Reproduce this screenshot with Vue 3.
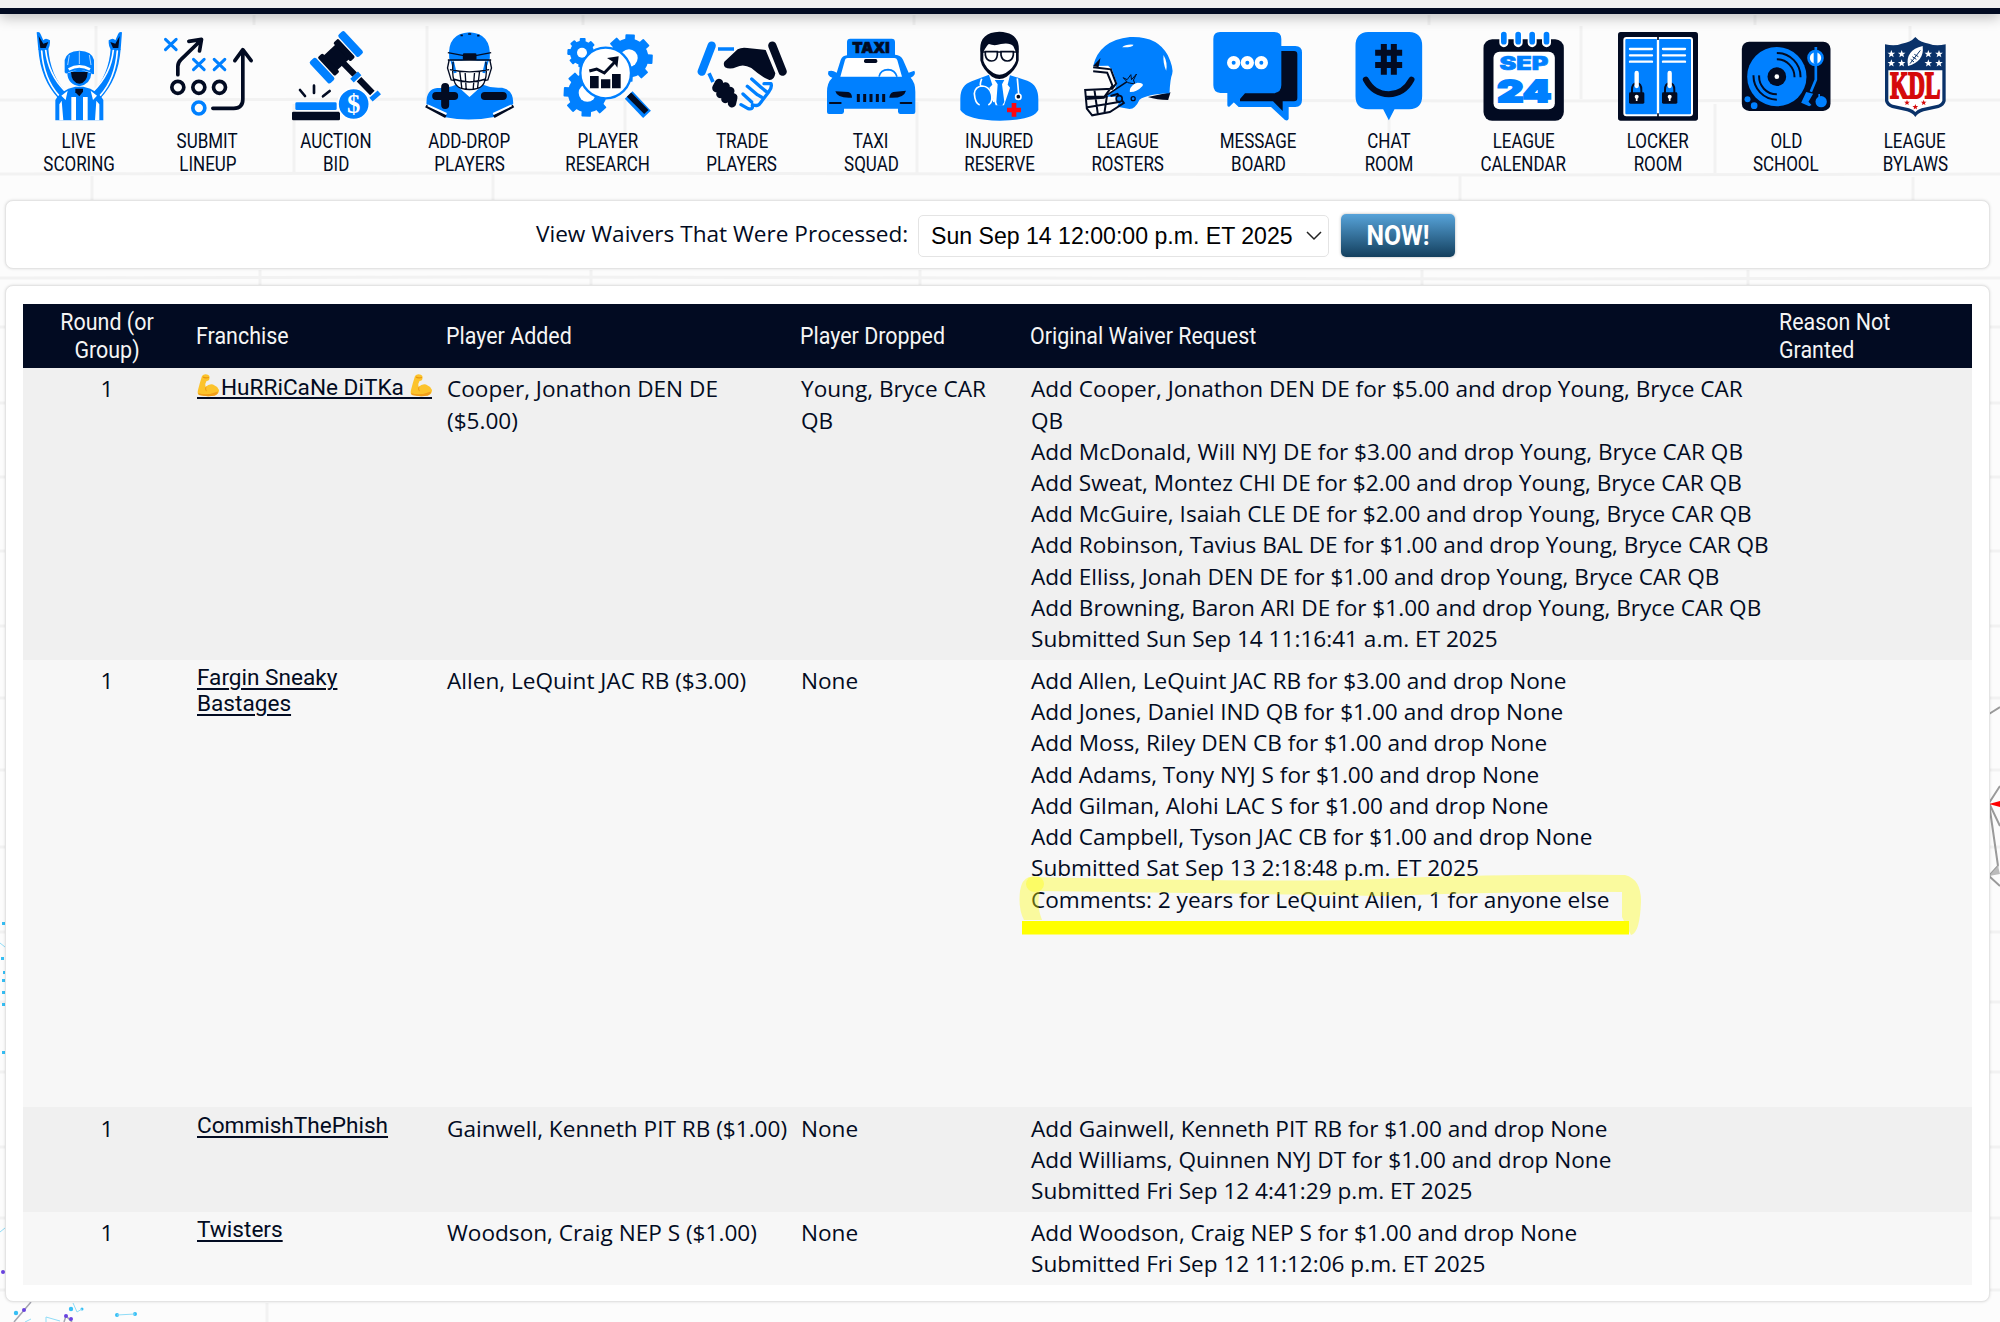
<script setup>
const B = '#0080ff'
const N = '#020b22'

const gear = (cx, cy, r, hole) => {
  let s = ''
  for (let i = 0; i < 8; i++) {
    s += `<rect x="${cx - r * 0.2}" y="${cy - r}" width="${r * 0.4}" height="${r}" rx="3" fill="${B}" transform="rotate(${i * 45 + 3} ${cx} ${cy})"/>`
  }
  return s + `<circle cx="${cx}" cy="${cy}" r="${r * 0.82}" fill="${B}"/><circle cx="${cx}" cy="${cy}" r="${hole}" fill="#fff"/>`
}
const star = (cx, cy, r, fill) => {
  const p = []
  for (let i = 0; i < 10; i++) {
    const a = -Math.PI / 2 + (i * Math.PI) / 5
    const q = i % 2 ? r * 0.42 : r
    p.push(`${(cx + q * Math.cos(a)).toFixed(1)},${(cy + q * Math.sin(a)).toFixed(1)}`)
  }
  return `<polygon points="${p.join(' ')}" fill="${fill}"/>`
}
const locker = (x) => `
  <g stroke="#fff" stroke-width="7" stroke-linecap="round"><path d="M${x + 15} 147h66M${x + 15} 166h66M${x + 15} 185h66"/></g>
  <path d="M${x + 21} 280v-10q0-20 14-20t14 20v10" fill="none" stroke="${N}" stroke-width="6"/>
  <path d="M${x + 35} 219v39" stroke="#fff" stroke-width="13" stroke-linecap="round"/>
  <rect x="${x + 12}" y="277" width="46" height="34" rx="4" fill="${N}"/>
  <circle cx="${x + 35}" cy="290" r="6" fill="#fff"/><path d="M${x + 35} 290v13" stroke="#fff" stroke-width="5"/>`

const items = [
  { a: 'LIVE', b: 'SCORING', x: 102, art: `
    <g fill="none" stroke-linejoin="round" stroke-linecap="round">
      <path d="M130 146Q136 232 186 285M347 146Q341 232 290 285" stroke="${B}" stroke-width="30" stroke-linecap="butt"/>
      <path d="M125 153Q131 236 176 286M137 150Q145 224 196 274M352 153Q346 236 301 286M340 150Q332 224 279 274" stroke="#fff" stroke-width="5"/>
    </g>
    <path d="M110 97Q119 94 122 103L130 121Q136 112 150 121Q151 139 143 149L115 149ZM366 97Q357 94 354 103L346 121Q340 112 326 121Q325 139 333 149L362 149Z" fill="${B}"/>
    <path d="M116 108L130 131L145 126L137 144L121 144ZM359 108L346 131L331 126L339 144L355 144Z" fill="${N}"/>
    <path d="M166 361V300Q174 282 205 266L226 260H250L271 266Q302 282 310 300V361Z" fill="${B}"/>
    <path d="M185 302L190 361H178V313ZM289 302L285 361H298V313Z" fill="#fff"/>
    <path d="M214 291V361H228V291ZM249 291V361H263V291ZM184 287L203 272L197 300ZM291 287L272 272L279 300Z" fill="#fff"/>
    <path d="M202 220Q203 253 238 259Q272 253 274 220L237 208Z" fill="${B}"/>
    <path d="M213 216H263Q262 248 238 251Q214 248 213 216Z" fill="${N}"/>
    <path d="M194 204V180Q200 153 238 152Q276 153 282 180V222Q274 224 270 217Q238 204 206 217Q199 224 194 217Z" fill="${B}"/>
    <path d="M206 208Q238 190 270 208" stroke="#fff" stroke-width="8" fill="none"/>
    <path d="M238 154V192M208 165L203 195M268 165L273 195" stroke="#fff" stroke-width="2"/>
    <path d="M226 266H249V275L238 289L226 277Z" fill="${N}"/>` },
  { a: 'SUBMIT', b: 'LINEUP', x: 487.5, art: `
    <g fill="none" stroke-linecap="round" stroke-linejoin="round">
      <path d="M495 118l32 31m0-31l-32 31M579 178l32 31m0-31l-32 31M641 178l32 31m0-31l-32 31" stroke="${B}" stroke-width="9"/>
      <circle cx="595" cy="324" r="18" stroke="${B}" stroke-width="11"/>
      <g stroke="${N}" stroke-width="11"><circle cx="532" cy="262" r="18"/><circle cx="595" cy="262" r="18"/><circle cx="657" cy="262" r="18"/></g>
      <path d="M532 224V199Q532 187 542 178L602 120M565 124L603 118L597 153M637 325H700Q727 325 727 298V151M703 182L727 149L752 182" stroke="${N}" stroke-width="11"/>
    </g>` },
  { a: 'AUCTION', b: 'BID', x: 873, art: `
    <g transform="translate(1009 172) rotate(-43)">
      <rect x="-38" y="-30" width="76" height="60" fill="${N}"/>
      <rect x="-42" y="-38" width="20" height="76" rx="5" fill="${N}"/>
      <rect x="22" y="-38" width="20" height="76" rx="5" fill="${N}"/>
      <rect x="46" y="-45" width="25" height="90" rx="7" fill="${B}"/>
      <rect x="-71" y="-45" width="25" height="90" rx="7" fill="${B}"/>
    </g>
    <path d="M1028 187L1064 224M1077 238L1117 279" stroke="${N}" stroke-width="19"/>
    <path d="M1056 242L1079 220M1113 299L1138 277" stroke="${B}" stroke-width="15"/>
    <path d="M900 270L915 288M942 257V279M989 273L969 289" stroke="${N}" stroke-width="8" stroke-linecap="round"/>
    <rect x="886" y="307" width="124" height="23" rx="4" fill="${B}"/><rect x="876" y="335" width="144" height="26" rx="4" fill="${N}"/>
    <circle cx="1061" cy="312" r="47" fill="${B}" stroke="#fff" stroke-width="5"/>
    <text x="1061" y="339" font-size="80" font-weight="700" font-family="Liberation Serif, serif" fill="#fff" text-anchor="middle">$</text>` },
  { a: 'ADD-DROP', b: 'PLAYERS', x: 73.5, art: `
    <path d="M78 312Q76 268 110 264Q140 266 166 254L207 291L248 254Q275 266 305 263Q340 270 338 312L286 350Q208 366 135 352Z" fill="${B}"/>
    <path d="M76 318L136 350M339 318L280 350" stroke="${N}" stroke-width="9"/><path d="M82 316L138 342M333 316L278 342" stroke="#fff" stroke-width="6"/>
    <path d="M146 175Q139 100 207 97Q273 100 268 175L258 200Q246 180 207 180Q168 180 158 200Z" fill="${B}"/>
    <path d="M154 182H260L256 226Q250 260 207 270Q164 260 158 226Z" fill="#fff"/>
    <path d="M156 185L164 219M258 185L250 219" stroke="${B}" stroke-width="9"/>
    <g fill="none" stroke="${N}" stroke-width="4"><path d="M142 158L190 167H225L272 158M142 180H272M146 180L141 204L152 240L164 242M268 180L273 204L262 240L250 242M148 209Q207 222 266 209M158 185Q150 256 182 265Q207 272 232 265Q264 256 256 185M158 237Q207 255 256 237M178 216L184 265M194 219L197 268M222 219L218 268M237 216L231 265"/></g>
    <rect x="187" y="160" width="41" height="20" rx="4" fill="${N}"/>
    <path d="M180 106h7m16-4h9m18 5h7" stroke="${N}" stroke-width="5"/>
    <path d="M134 261V315M107 288H161M253 288H307" stroke="${N}" stroke-width="24" stroke-linecap="round"/>` },
  { a: 'PLAYER', b: 'RESEARCH', x: 489, art: gear(546, 158, 44, 15) + gear(687, 174, 71, 26) + gear(562, 279, 71, 26) + `
    <circle cx="617" cy="219" r="76" fill="#fff" stroke="${B}" stroke-width="7"/>
    <path d="M568 213L590 207L613 219L648 182" stroke="${N}" stroke-width="9" fill="none"/><path d="M621 174L656 169L652 203L641 187Z" fill="${N}"/>
    <path d="M570 228h26v37h-26zM603 238h28v27h-28zM636 222h26v43h-26z" fill="${N}"/>
    <path d="M686 285L741 343" stroke="${B}" stroke-width="32"/><path d="M687 284L739 336" stroke="${N}" stroke-width="18"/>` },
  { a: 'TRADE', b: 'PLAYERS', x: 891, art: `
    <path d="M935 137L905 215" stroke="${B}" stroke-width="25" stroke-linecap="round"/><path d="M1117 137L1148 215" stroke="${N}" stroke-width="25" stroke-linecap="round"/>
    <path d="M954 147H1002M927 220L939 246" stroke="${B}" stroke-width="11"/>
    <path d="M973 185L1013 148Q1025 141 1042 144L1097 150L1126 220Q1123 241 1108 240Q1085 231 1054 204Q1030 190 1010 201Q990 210 975 202Q969 194 973 185Z" fill="${N}"/>
    <path d="M957 249L949 264M977 259L961 282M991 273L976 297M1000 292L996 310" stroke="${N}" stroke-width="25" stroke-linecap="round"/>
    <path d="M1055 237L1082 261M1042 259L1072 284M1029 282L1055 306M1023 314L1044 326Q1060 330 1057 316M1092 251L1113 251Q1117 262 1106 276L1081 309Q1074 321 1058 314M1072 284L1084 291M1082 261L1098 274" stroke="${B}" stroke-width="10" fill="none" stroke-linecap="round" stroke-linejoin="round"/>` },
  { a: 'TAXI', b: 'SQUAD', x: 78, art: `
    <path d="M141 166V126Q141 116 151 116H275Q285 116 285 126V164Q303 165 309 179L326 218L343 212Q350 224 332 233Q346 247 346 275V336Q346 342 340 342H301Q295 342 294 335V326H132V335Q131 342 125 342H87Q81 342 81 336V275Q81 248 97 233Q81 229 85 214Q96 209 110 218L122 180Q127 167 141 166Z" fill="${B}"/>
    <path d="M135 180Q136 174 143 174H283Q290 174 292 181L306 230H121Z" fill="#fff"/>
    <path d="M237 230Q242 209 264 209Q285 210 291 230" stroke="${B}" stroke-width="5" fill="none"/>
    <rect x="192" y="177" width="40" height="12" rx="5" fill="${N}"/>
    <path d="M106 274L145 276Q156 280 156 293Q112 296 106 274ZM318 272L280 276Q269 280 268 293Q312 296 318 272Z" fill="${N}"/>
    <path d="M175 282v24m19-24v24m19-24v24m19-24v24m19-24v24" stroke="${N}" stroke-width="9"/><path d="M90 309h32m180 0h32" stroke="${N}" stroke-width="6" stroke-linecap="round"/>
    <text x="213" y="160" text-anchor="middle" font-family="Inter, sans-serif" font-weight="900" font-size="45" textLength="112" lengthAdjust="spacingAndGlyphs" fill="${N}" stroke="${N}" stroke-width="2">TAXI</text>` },
  { a: 'INJURED', b: 'RESERVE', x: 462, art: `
    <path d="M481 330V295Q481 256 515 244L565 225H628L682 242Q715 254 715 298V330Q700 361 600 362Q500 361 481 330Z" fill="${B}"/>
    <path d="M567 225L577 254L568 263L587 316H612L630 263L623 254L630 225Z" fill="#fff"/><path d="M584 240H613L606 253L613 306L606 317H593L589 306L593 253Z" fill="${B}"/>
    <path d="M541 157Q535 97 598 95Q662 97 656 157V181Q650 208 620 230Q598 244 576 230Q547 208 541 181Z" fill="${N}"/>
    <path d="M550 156Q563 132 567 132Q583 139 603 132Q630 127 640 139L648 157V182Q640 204 617 219Q598 230 580 219Q557 204 550 182Z" fill="#fff"/>
    <path d="M543 156H655" stroke="${N}" stroke-width="4"/><path d="M556 155H592V165Q590 183 575 183Q559 183 556 165ZM603 155H640V165Q637 183 622 183Q606 183 603 165Z" fill="#fff" stroke="${N}" stroke-width="5"/>
    <path d="M545 236Q536 261 547 258Q567 259 574 281L582 306M547 258Q525 259 523 281Q525 310 539 315M574 281Q580 306 565 315M652 235L656 282" stroke="#fff" stroke-width="5" fill="none"/>
    <circle cx="655" cy="290" r="8" fill="${N}" stroke="#fff" stroke-width="5"/><path d="M642 309V350M621 330H663" stroke="#fe0610" stroke-width="14"/>` },
  { a: 'LEAGUE', b: 'ROSTERS', x: 847.5, art: `
    <path d="M1042 291L1110 277L1103 300Q1070 300 1042 291Z" fill="${N}"/>
    <path d="M878 198Q896 121 988 111Q1071 107 1102 166Q1120 204 1115 222Q1109 236 1107 280Q1040 283 1017 299Q1005 326 987 327L950 320L963 290L917 290L944 266L949 249L935 209L923 197Z" fill="${B}"/>
    <path d="M878 198L900 174L894 202Z" fill="${N}"/>
    <g fill="none" stroke="${N}" stroke-width="6"><path d="M878 202L931 208L947 251L935 266L854 270L859 326L875 346L928 336L970 309L951 282L930 288M878 214L920 218L936 257L910 293L856 297M882 271L892 342M855 290H919L912 337M861 322L960 305"/><path d="M912 290L981 244" stroke-width="5"/></g>
    <path d="M968 233L980 239L991 224L993 239L1008 222L999 240L1003 252L982 248Z" fill="${B}" stroke="${N}" stroke-width="3"/>
    <circle cx="956" cy="296" r="9" fill="${B}" stroke="${N}" stroke-width="5"/><circle cx="998" cy="296" r="6" fill="${B}" stroke="${N}" stroke-width="4"/>
    <path d="M988 270Q992 253 1011 248Q1032 249 1026 258Q1009 277 988 276ZM965 142Q975 132 999 134Q996 143 965 142ZM1089 165Q1102 187 1097 212Q1087 190 1089 165Z" fill="#fff"/>` },
  { a: 'MESSAGE', b: 'BOARD', x: 39, art: `
    <path d="M200 138H286Q306 138 306 158V300Q306 320 286 321H266V356Q264 364 255 360L213 321H116L90 296Z" fill="${B}"/>
    <path d="M240 153H282Q292 153 292 163V294Q292 304 282 304H248V333L219 304H120V297L135 280H225L240 260Z" fill="${N}"/>
    <path d="M60 96H223Q244 96 244 117V255Q244 278 222 279H130L88 320Q82 322 82 315V279H61Q40 278 40 256V117Q40 96 60 96Z" fill="${B}"/>
    <g fill="${B}" stroke="#fff" stroke-width="14"><circle cx="101" cy="188" r="13"/><circle cx="142" cy="188" r="13"/><circle cx="184" cy="188" r="13"/></g>` },
  { a: 'CHAT', b: 'ROOM', x: 431.5, art: `
    <path d="M504 96H627Q666 98 666 137V288Q666 326 627 328H583L566 361L549 328H504Q466 326 466 288V137Q466 98 504 96Z" fill="${B}"/>
    <path d="M551 132V224M581 132V224M525 158H606M525 195H606" stroke="${N}" stroke-width="18"/>
    <path d="M497 239Q520 282 566 283Q611 282 634 239" stroke="${N}" stroke-width="18" stroke-linecap="round" fill="none"/>` },
  { a: 'LEAGUE', b: 'CALENDAR', x: 835.5, art: `
    <rect x="849" y="118" width="241" height="244" rx="26" fill="${N}"/><rect x="879" y="155" width="184" height="173" rx="18" fill="#fff"/>
    <path d="M910 105V128M953 105V128M995 105V128M1038 105V128" stroke="#fff" stroke-width="27" stroke-linecap="round"/>
    <path d="M910 104V125M953 104V125M995 104V125M1038 104V125" stroke="${B}" stroke-width="17" stroke-linecap="round"/>
    <g font-family="Inter, sans-serif" font-weight="900" fill="${B}" stroke="${B}" text-anchor="middle"><text x="970" y="211" font-size="55" stroke-width="2" textLength="146" lengthAdjust="spacingAndGlyphs">SEP</text><text x="971" y="306" font-size="91" stroke-width="6" textLength="162" lengthAdjust="spacingAndGlyphs">24</text></g>` },
  { a: 'LOCKER', b: 'ROOM', x: 39, art: `
    <rect x="54" y="96" width="240" height="266" rx="8" fill="${N}"/>
    <rect x="73" y="114" width="203" height="232" rx="6" fill="${B}" stroke="#fff" stroke-width="6"/><path d="M174 114V346" stroke="#fff" stroke-width="7"/><path d="M174 106V120M174 340V352" stroke="${N}" stroke-width="5"/>` + locker(75) + locker(174) },
  { a: 'OLD', b: 'SCHOOL', x: 424.5, art: `
    <rect x="427" y="125" width="266" height="208" rx="22" fill="${N}"/><circle cx="532" cy="230" r="89" fill="${B}"/>
    <circle cx="532" cy="230" r="28" fill="${N}"/><circle cx="532" cy="230" r="7" fill="#fff"/>
    <path d="M532 159A71 71 0 0 1 603 232M532 178A53 53 0 0 1 585 232M462 226A71 71 0 0 0 532 299M479 226A53 53 0 0 0 532 283" fill="none" stroke="${N}" stroke-width="6"/>
    <circle cx="648" cy="174" r="21" fill="#fff" stroke="${B}" stroke-width="8"/><path d="M649 141V239L634 275" fill="none" stroke="${B}" stroke-width="8"/><path d="M648 154V190" stroke="${B}" stroke-width="11"/>
    <path d="M620 276L641 281L627 305L636 315L629 319L605 308Z" fill="${B}"/>
    <circle cx="665" cy="305" r="17" fill="${B}"/><path d="M659 282V300" stroke="${B}" stroke-width="5"/><circle cx="444" cy="298" r="9" fill="${B}"/><circle cx="464" cy="317" r="10" fill="${B}"/>` },
  { a: 'LEAGUE', b: 'BYLAWS', x: 810, art: `
    <path d="M855 133Q886 139 905 131Q931 128 946 111Q961 128 987 131Q1006 139 1037 133V303Q1034 318 1016 324L971 334Q954 339 946 351Q938 339 921 334L876 324Q858 318 855 303Z" fill="#0a3269"/>
    <path d="M865 211H1027V302Q1023 312 1010 315L965 325Q951 330 946 336Q941 330 927 325L882 315Q869 312 865 302Z" fill="#fff"/>` +
    [[874, 162], [905, 162], [985, 162], [1017, 162], [874, 190], [905, 190], [985, 190], [1017, 190]].map(p => star(p[0], p[1], 12, '#fff')).join('') + `
    <path d="M924 198Q915 151 968 138Q974 184 924 198Z" fill="#fff"/><path d="M930 191L961 151M937 170l12 8M943 163l12 7M932 178l10 8" stroke="#0a3269" stroke-width="3"/>
    <text x="946" y="294" font-family="Liberation Serif, serif" font-weight="700" font-size="112" text-anchor="middle" textLength="150" lengthAdjust="spacingAndGlyphs" fill="#d50a0a" stroke="#d50a0a" stroke-width="6">KDL</text>` +
    star(921, 308, 9, '#d50a0a') + star(971, 308, 9, '#d50a0a') + star(946, 321, 9, '#d50a0a') },
]

const rows = [
  { name: 'HuRRiCaNe DiTKa', flex: true, added: 'Cooper, Jonathon DEN DE ($5.00)', dropped: 'Young, Bryce CAR QB', lines: [
    'Add Cooper, Jonathon DEN DE for $5.00 and drop Young, Bryce CAR QB',
    'Add McDonald, Will NYJ DE for $3.00 and drop Young, Bryce CAR QB',
    'Add Sweat, Montez CHI DE for $2.00 and drop Young, Bryce CAR QB',
    'Add McGuire, Isaiah CLE DE for $2.00 and drop Young, Bryce CAR QB',
    'Add Robinson, Tavius BAL DE for $1.00 and drop Young, Bryce CAR QB',
    'Add Elliss, Jonah DEN DE for $1.00 and drop Young, Bryce CAR QB',
    'Add Browning, Baron ARI DE for $1.00 and drop Young, Bryce CAR QB',
    'Submitted Sun Sep 14 11:16:41 a.m. ET 2025'] },
  { name: 'Fargin Sneaky Bastages', tall: true, added: 'Allen, LeQuint JAC RB ($3.00)', dropped: 'None', lines: [
    'Add Allen, LeQuint JAC RB for $3.00 and drop None',
    'Add Jones, Daniel IND QB for $1.00 and drop None',
    'Add Moss, Riley DEN CB for $1.00 and drop None',
    'Add Adams, Tony NYJ S for $1.00 and drop None',
    'Add Gilman, Alohi LAC S for $1.00 and drop None',
    'Add Campbell, Tyson JAC CB for $1.00 and drop None',
    'Submitted Sat Sep 13 2:18:48 p.m. ET 2025',
    'Comments: 2 years for LeQuint Allen, 1 for anyone else'] },
  { name: 'CommishThePhish', added: 'Gainwell, Kenneth PIT RB ($1.00)', dropped: 'None', lines: [
    'Add Gainwell, Kenneth PIT RB for $1.00 and drop None',
    'Add Williams, Quinnen NYJ DT for $1.00 and drop None',
    'Submitted Fri Sep 12 4:41:29 p.m. ET 2025'] },
  { name: 'Twisters', added: 'Woodson, Craig NEP S ($1.00)', dropped: 'None', lines: [
    'Add Woodson, Craig NEP S for $1.00 and drop None',
    'Submitted Fri Sep 12 11:12:06 p.m. ET 2025'] },
]

const arm = '<path d="M5 3Q7 .5 10 1.5Q13 2 12.5 5Q12.5 8 9.5 8Q7.5 11 8.5 14Q12 10.5 16 11.5Q20 13 22 17Q22 21 18 22.5Q10 24 2 22Q0 21 1 17Q3 9 5 3Z" fill="#fcc32c"/><path d="M1 20Q10 23 21 18.5Q21 21 18 22.5Q10 24 2 22ZM8.5 14Q7 17 10 18.5Q8.5 16 9.5 13Z" fill="#f09d1c"/><path d="M6 4Q8 5.500 12 4.500" stroke="#e8970f" stroke-width="1.200" fill="none"/>'
const seams = [100, 174, 278, 327, 403, 477, 551, 626, 698, 770, 847, 932, 1002, 1072, 1147, 1218, 1290]
</script>

<template>
  <div class="page">
    <svg class="wall" width="2000" height="1322" viewBox="0 0 2000 1322" aria-hidden="true">
      <g stroke="#f2f2f2" stroke-width="3" fill="none">
        <path v-for="y in seams" :key="y" :d="`M0 ${y}Q500 ${y - 2} 1000 ${y}T2000 ${y}`" />
        <path d="M96 26v74M294 104v69M92 176v25M427 26v74M625 100v72M493 174v26M254 15v10M583 15v10M914 15v10M917 102v72M1429 15v10M1581 26v73M1389 104v70M1460 174v26M1715 104v69M1755 15v10M1913 177v25M1910 26v25" />
        <path d="M260 270v16M591 270v16M920 270v16M1422 270v16M1748 270v16M267 1303v19" />
      </g>
      <path d="M1989 714L2000 707M1989 803L2000 786M1989 803L2000 826M1989 803L1998 866M1989 876L1998 866M1989 876L2000 886" fill="none" stroke="#9a9a9a" stroke-width="2" />
      <path d="M1989 804L2000 801V807Z" fill="#f00" />
      <path d="M1989 876L1998 866L2000 874Z" fill="#bbb" />
      <g fill="#36bff5">
        <rect v-for="y in [922, 957, 971, 979, 991, 1003, 1051]" :key="y" :x="y % 3 + 1" :y="y" width="3" height="3" />
        <circle cx="16" cy="1313" r="2.2" /><circle cx="71" cy="1309" r="2.2" /><circle cx="82" cy="1309" r="1.5" /><circle cx="117" cy="1315" r="2" /><circle cx="135" cy="1314" r="2" />
      </g>
      <path d="M117 1315L135 1314M46 1322V1317L60 1321M73 1303L77 1312L82 1309M0 943L5 947M0 1232L5 1228M25 1322L31 1319" stroke="#8fdcf7" fill="none" />
      <path d="M14 1322L31 1302M64 1322L66 1316L72 1322" stroke="#a5a5b0" stroke-width="1.5" fill="none" />
      <g fill="#6943e0"><circle cx="24" cy="1310" r="2" /><circle cx="66" cy="1316" r="2" /><circle cx="71" cy="1319" r="2" /><circle cx="3" cy="1272" r="2" /></g>
    </svg>

    <div class="topbar"></div>
    <nav class="menu">
      <a v-for="it in items" :key="it.a + it.b" class="item">
        <svg class="icon" width="90" height="90" :viewBox="`${it.x} 93 270 270`" v-html="it.art"></svg>
        <span class="cond">{{ it.a }}</span>
        <span class="cond">{{ it.b }}</span>
      </a>
    </nav>

    <section class="panel filter">
      <label>View Waivers That Were Processed:</label>
      <div class="select">
        <span>Sun Sep 14 12:00:00 p.m. ET 2025</span>
        <svg width="16" height="10" viewBox="0 0 16 10"><path d="M1 1l7 7 7-7" fill="none" stroke="#222" stroke-width="1.5" /></svg>
      </div>
      <button class="now"><span class="cond">NOW!</span></button>
    </section>

    <section class="panel report">
      <div class="row head">
        <div class="c1"><span class="cond">Round (or</span><span class="cond">Group)</span></div>
        <div><span class="cond">Franchise</span></div>
        <div><span class="cond">Player Added</span></div>
        <div><span class="cond">Player Dropped</span></div>
        <div><span class="cond">Original Waiver Request</span></div>
        <div><span class="cond">Reason Not</span><span class="cond">Granted</span></div>
      </div>
      <div v-for="r in rows" :key="r.name" class="row" :class="{ tall: r.tall }">
        <div class="c1">1</div>
        <div class="team">
          <a v-if="r.flex" class="flexed"><svg class="arm" viewBox="0 0 22 24" v-html="arm"></svg><span>{{ r.name }}&nbsp;</span><svg class="arm" viewBox="0 0 22 24" v-html="arm"></svg></a>
          <a v-else>{{ r.name }}</a>
        </div>
        <div class="added">{{ r.added }}</div>
        <div class="dropped">{{ r.dropped }}</div>
        <div class="request">
          <p v-for="l in r.lines" :key="l">{{ l }}</p>
          <svg v-if="r.tall" class="marker" width="630" height="64" viewBox="1016 874 630 64">
            <g fill="#ffff00" fill-opacity=".36">
              <path d="M1029 878Q1300 884 1380 880Q1480 875 1625 876Q1641 880 1641 902Q1640 934 1631 936L1622 918V893Q1500 892 1380 897Q1200 894 1040 892Q1036 905 1042 921H1024Q1018 910 1020 892Q1022 880 1029 878Z" />
              <ellipse cx="1035" cy="885" rx="9" ry="8" />
            </g>
            <rect x="1022" y="922" width="607" height="13.5" fill="#ffff00" />
          </svg>
        </div>
        <div></div>
      </div>
    </section>
  </div>
</template>

<style>
body { margin: 0; background: #fcfcfc; }
</style>

<style scoped>
.page { position: relative; width: 2000px; height: 1322px; overflow: hidden; background: #fcfcfc; color: #020b22; font: 22.6px/31.24px "Open Sans", sans-serif; }
.wall { position: absolute; inset: 0; }
.topbar { position: relative; height: 6px; border-top: 8px solid #f1f1f1; background: #020b22; box-shadow: 0 3px 14px rgba(0, 0, 0, .28); }
.menu { position: relative; display: grid; grid-template-columns: 128.5px 128.5px 128.5px 138.5px 138.5px 129.5px 128.5px 128px 128.5px 132.5px 128.5px 141.5px 127.5px 129px 128.5px; margin-left: 14.75px; padding-top: 17px; height: 169px; box-sizing: content-box; }
.item { display: flex; flex-direction: column; align-items: center; font: 19.5px/23px Roboto, sans-serif; }
.icon { display: block; margin-bottom: 9px; overflow: visible; }
.cond { display: block; white-space: nowrap; transform: scaleX(.87); }
.panel { position: relative; box-sizing: border-box; width: 1985px; margin-left: 5px; background: #fff; border: 1px solid #e4e4e4; border-radius: 8px; box-shadow: 0 0 3px rgba(0, 0, 0, .13); }
.filter { display: flex; align-items: flex-start; height: 69px; padding: 13px 0 0 530px; }
.filter label { width: 382px; line-height: 39px; white-space: nowrap; }
.select { display: flex; align-items: center; justify-content: space-between; box-sizing: border-box; width: 411px; height: 42px; padding: 0 6px 0 12px; border: 1px solid #e4e4e4; border-radius: 5px; background: #fff; color: #000; font: 23.1px "Liberation Sans", sans-serif; white-space: nowrap; margin-top: 1px; }
.now { width: 114px; height: 43px; margin-left: 12px; padding: 0; border: 0; border-radius: 5px; background: linear-gradient(#57a3d9, #133f5d); box-shadow: 0 0 3px rgba(0, 0, 0, .3); color: #fff; font: bold 28px/40px Roboto, sans-serif; }
.now .cond { transform: scaleX(.885); }
.report { height: 1017px; margin-top: 16px; padding: 18px 17px; }
.row { display: grid; grid-template-columns: 168px 250px 354px 230px 749px 197px; padding: 5.3px 0; background: #f7f7f7; }
.row:nth-child(even) { background: #f0f0f0; }
.row > div { padding: 0 5px 0 6px; }
.row > .c1 { padding: 0 5px; text-align: center; }
.row.head { align-items: center; height: 64px; padding: 0; background: #020b22; color: #f5f5f5; font: 24px/28px Roboto, sans-serif; }
.row.head > div { padding: 0 5px 1px; }
.head .cond { transform: scaleX(.893); transform-origin: left; }
.head .c1 .cond { transform-origin: center; }
.row.tall { height: 437px; }
.team { font: 22.6px/26px Roboto, sans-serif; white-space: nowrap; }
.tall .team { white-space: normal; }
.tall .team a { display: block; width: 170px; }
.team a { text-decoration: underline; text-underline-offset: 3px; text-decoration-thickness: 2px; }
.team .flexed { display: inline-flex; align-items: flex-start; height: 24px; border-bottom: 2px solid #020b22; text-decoration: none; }
.flexed span { margin: 0 1px 0 2px; line-height: 29px; }
.arm { flex: none; width: 22px; height: 24px; }
.row > .added { padding-right: 3px; }
.row > .dropped { padding-right: 12px; }
.request { position: relative; }
.request p { margin: 0; width: 743px; }
.marker { position: absolute; left: -9px; top: 208px; }
</style>
